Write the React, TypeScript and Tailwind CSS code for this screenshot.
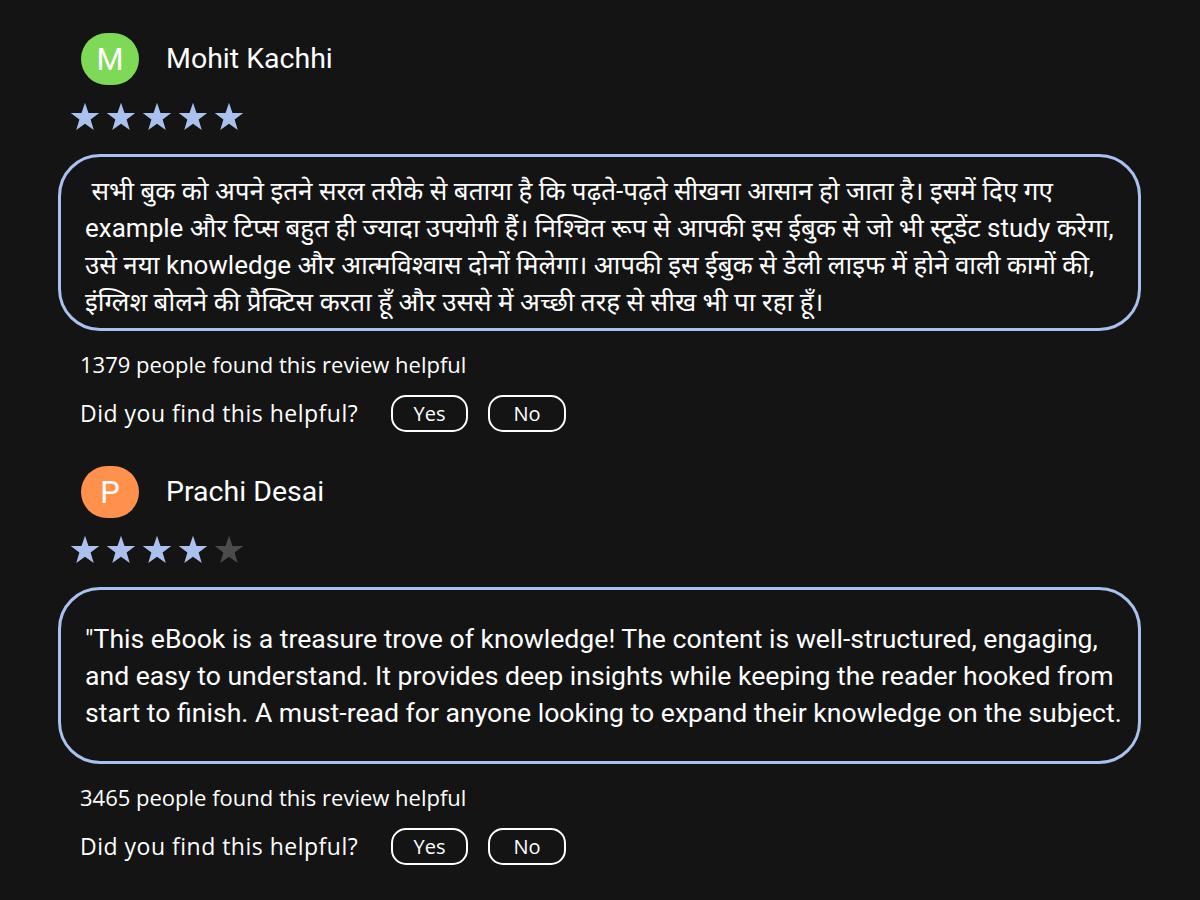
import React from "react";

type Review = {
  initial: string;
  name: string;
  color: string;
  rating: number;
  lines: string[];
  helpful: number;
  textClass: string;
};

const reviews: Review[] = [
  {
    initial: "M",
    name: "Mohit Kachhi",
    color: "bg-[#7ed957]",
    rating: 5,
    lines: [
      " सभी बुक को अपने इतने सरल तरीके से बताया है कि पढ़ते-पढ़ते सीखना आसान हो जाता है। इसमें दिए गए",
      "example और टिप्स बहुत ही ज्यादा उपयोगी हैं। निश्चित रूप से आपकी इस ईबुक से जो भी स्टूडेंट study करेगा,",
      "उसे नया knowledge और आत्मविश्वास दोनों मिलेगा। आपकी इस ईबुक से डेली लाइफ में होने वाली कामों की,",
      "इंग्लिश बोलने की प्रैक्टिस करता हूँ और उससे में अच्छी तरह से सीख भी पा रहा हूँ।",
    ],
    helpful: 1379,
    textClass: "pt-[8px] text-[26px]",
  },
  {
    initial: "P",
    name: "Prachi Desai",
    color: "bg-[#ff914d]",
    rating: 4,
    lines: [
      "\"This eBook is a treasure trove of knowledge! The content is well-structured, engaging,",
      "and easy to understand. It provides deep insights while keeping the reader hooked from",
      "start to finish. A must-read for anyone looking to expand their knowledge on the subject.",
    ],
    helpful: 3465,
    textClass: "pt-0 text-[26.6px]",
  },
];

function Star({ filled }: { filled: boolean }) {
  return (
    <svg width="30" height="29" viewBox="0 0 24 23" className={filled ? "fill-[#a9c1ec]" : "fill-[#4b4b4b]"}>
      <polygon points="12,0.5 14.8,8.6 23.4,8.7 16.5,13.9 19,22.2 12,17.3 5,22.2 7.5,13.9 0.6,8.7 9.2,8.6" />
    </svg>
  );
}

function ReviewCard({ r }: { r: Review }) {
  return (
    <div className="flex flex-col">
      <div className="flex items-center pl-[23px]">
        <div className={`w-[58px] h-[52px] rounded-full ${r.color} flex items-center justify-center text-white text-[31px] leading-none`}>
          {r.initial}
        </div>
        <span className="ml-[27px] text-[28.5px] text-white">{r.name}</span>
      </div>

      <div className="flex gap-[6px] pl-[12px] mt-[17px]">
        {[1, 2, 3, 4, 5].map((i) => (
          <Star key={i} filled={i <= r.rating} />
        ))}
      </div>

      <div className={`mt-[23px] h-[177px] border-[3px] border-[#a9c1ec] rounded-[42px] flex items-center pl-[24px] pr-[10px] ${r.textClass}`}>
        <p className="leading-[37px] text-white">
          {r.lines.map((l, i) => (
            <span key={i} className="block whitespace-pre">
              {l}
            </span>
          ))}
        </p>
      </div>

      <p className="mt-[19px] pl-[22px] text-[22px] leading-[28px] text-white font-['Open_Sans',sans-serif]">
        {r.helpful} people found this review helpful
      </p>

      <div className="mt-[17px] pl-[22px] flex items-center font-['Open_Sans',sans-serif] text-white">
        <span className="w-[311px] text-[23px] tracking-[0.5px]">Did you find this helpful?</span>
        <button className="w-[77px] h-[37px] border-2 border-white rounded-[15px] text-[20px] leading-none">Yes</button>
        <button className="ml-[20px] w-[78px] h-[37px] border-2 border-white rounded-[15px] text-[20px] leading-none">No</button>
      </div>
    </div>
  );
}

export default function App() {
  return (
    <main className="min-h-screen bg-[#141414] pl-[58px] pr-[59px] pt-[33px] font-['Roboto','Noto_Sans',sans-serif]">
      <div className="flex flex-col gap-[34px]">
        {reviews.map((r) => (
          <ReviewCard key={r.name} r={r} />
        ))}
      </div>
    </main>
  );
}
